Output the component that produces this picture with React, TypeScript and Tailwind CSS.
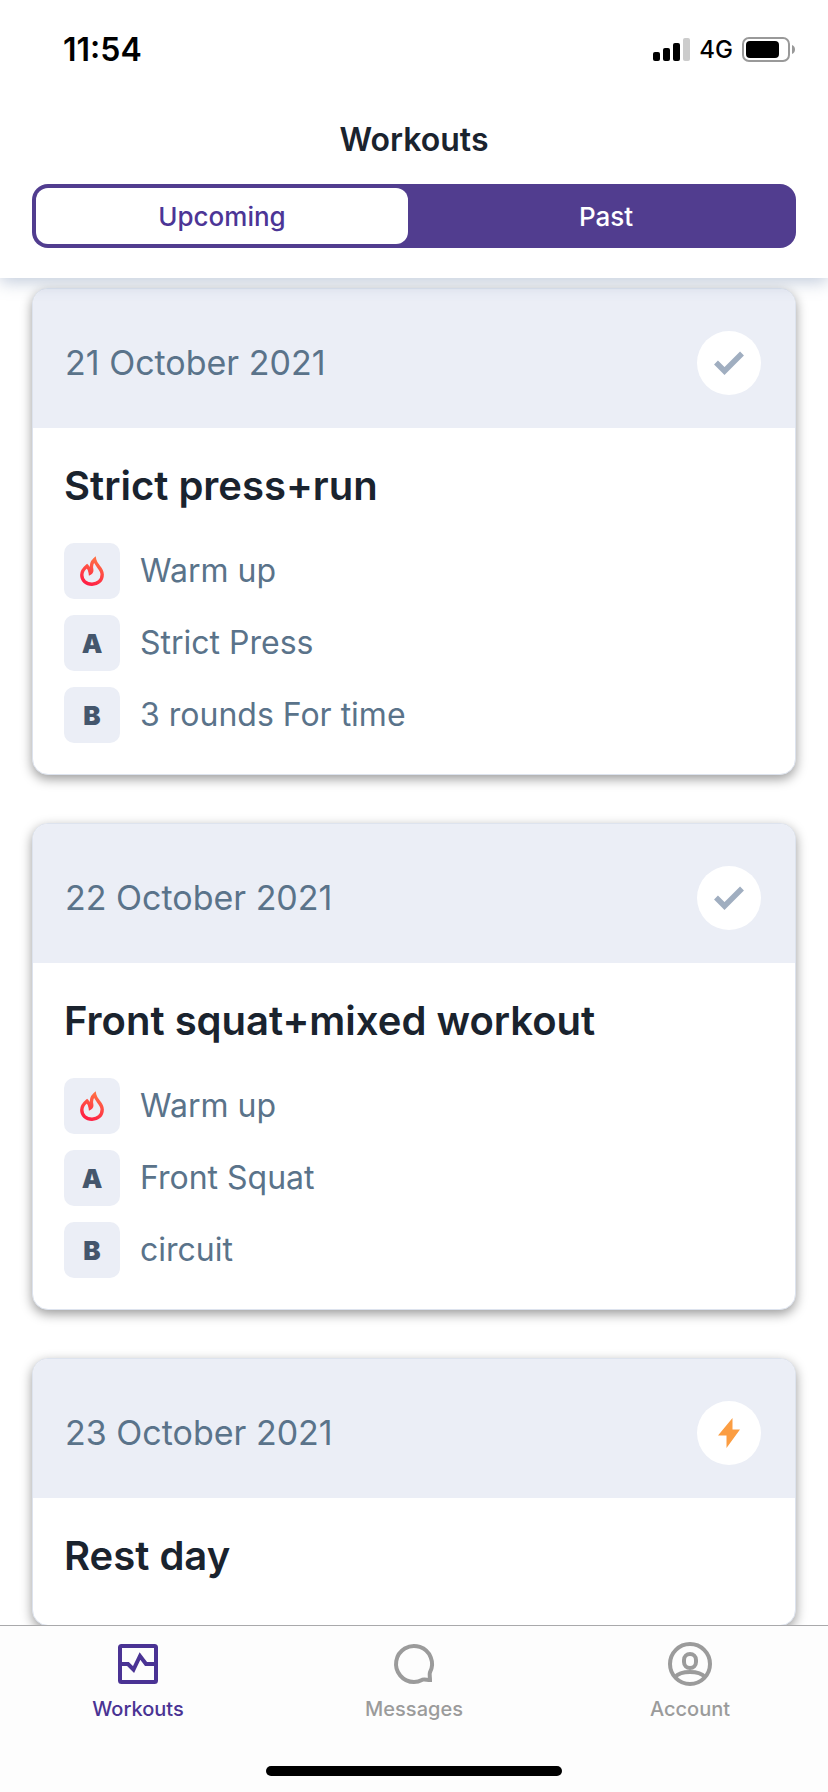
import { useState } from "react";

type Part = { badge: string; label: string };

type Workout = {
  date: string;
  title: string;
  rest?: boolean;
  parts: Part[];
};

const workouts: Workout[] = [
  {
    date: "21 October 2021",
    title: "Strict press+run",
    parts: [
      { badge: "warmup", label: "Warm up" },
      { badge: "A", label: "Strict Press" },
      { badge: "B", label: "3 rounds For time" },
    ],
  },
  {
    date: "22 October 2021",
    title: "Front squat+mixed workout",
    parts: [
      { badge: "warmup", label: "Warm up" },
      { badge: "A", label: "Front Squat" },
      { badge: "B", label: "circuit" },
    ],
  },
  {
    date: "23 October 2021",
    title: "Rest day",
    rest: true,
    parts: [],
  },
];

function SignalIcon() {
  return (
    <svg width="37" height="24" viewBox="0 0 37 24" aria-hidden="true">
      <rect x="0" y="14" width="7" height="9" rx="2" />
      <rect x="10" y="10" width="7" height="13" rx="2" />
      <rect x="20" y="5" width="7" height="18" rx="2" />
      <rect x="30" y="0" width="7" height="23" rx="2" fill="#cccccc" />
    </svg>
  );
}

function BatteryIcon() {
  return (
    <svg width="54" height="26" viewBox="0 0 54 26" aria-hidden="true">
      <rect x="1" y="1" width="46" height="23" rx="6" fill="none" stroke="#999999" strokeWidth="2" />
      <rect x="4" y="4" width="33" height="17" rx="4" />
      <path d="M50 8c2 .8 3 2.400 3 4.500s-1 3.700-3 4.500z" fill="#999999" />
    </svg>
  );
}

function FlameIcon() {
  return (
    <svg width="26" height="32" viewBox="0 0 26 32" fill="none" aria-hidden="true">
      <defs>
        <linearGradient id="flame" x1="20" y1="1" x2="6" y2="31" gradientUnits="userSpaceOnUse">
          <stop stopColor="#ff7a45" />
          <stop offset="1" stopColor="#ff1744" />
        </linearGradient>
      </defs>
      <path
        d="M15.600 4.500C12.300 7.500 12 11 12.700 14.500C13 16.500 12.500 17.300 11.300 18C11 15.500 10 13 8 11C5 13.500 2.800 16.500 2.800 20C2.800 25.500 7.200 29.200 13 29.200C18.800 29.200 23.200 25.500 23.200 19.500C23.200 13 16.800 11 15.600 4.500Z"
        stroke="url(#flame)"
        strokeWidth="3.400"
      />
    </svg>
  );
}

function CheckIcon() {
  return (
    <svg width="30" height="24" viewBox="0 0 30 24" fill="none" aria-hidden="true">
      <path d="M2 11.500 10.500 20 28 2.500" stroke="#a0aec0" strokeWidth="5.500" />
    </svg>
  );
}

function BoltIcon() {
  return (
    <svg width="22" height="30" viewBox="0 0 22 30" aria-hidden="true">
      <path d="M14.500 0v11.500H22L8.500 30V17.500H0z" fill="#fb9d42" />
    </svg>
  );
}

function WorkoutsIcon() {
  return (
    <svg width="48" height="48" viewBox="0 0 48 48" fill="none" stroke="currentColor" strokeWidth="4" aria-hidden="true">
      <rect x="6" y="6" width="36" height="36" rx="1.500" />
      <path d="M6 24h8l5.500 5.500L26 16l6 8h10" />
    </svg>
  );
}

function MessagesIcon() {
  return (
    <svg width="48" height="48" viewBox="0 0 48 48" fill="none" stroke="currentColor" strokeWidth="4" aria-hidden="true">
      <path d="M39.900 32.500A18 18 0 1 0 24 42c3.500 0 6-1 8.500-2.300 2-.7 4.500.3 7.500.3 0-3-.7-5.500-.1-7.500Z" />
    </svg>
  );
}

function AccountIcon() {
  return (
    <svg width="48" height="48" viewBox="0 0 48 48" fill="none" stroke="currentColor" strokeWidth="4" aria-hidden="true">
      <circle cx="24" cy="24" r="20" />
      <rect x="18" y="14" width="12" height="14" rx="6" />
      <path d="M9 37c3-3.500 8.500-5 15-5s12 1.500 15 5" />
    </svg>
  );
}

function StatusBar() {
  return (
    <div className="flex h-[100px] items-center justify-between pr-8 pl-[63px] text-black">
      <span className="text-[32px] leading-10 font-semibold">11:54</span>
      <div className="flex items-center gap-[9px]">
        <SignalIcon />
        <span className="text-2xl font-medium">4G</span>
        <BatteryIcon />
      </div>
    </div>
  );
}

function WorkoutCard({ workout }: { workout: Workout }) {
  return (
    <article className="overflow-hidden rounded-2xl border border-[#dde3ee] bg-white shadow-[0_4px_12px_rgba(0,0,0,0.4)]">
      <header className="flex items-center justify-between bg-[#ebeef6] pt-[42px] pr-[34px] pb-[33px] pl-8">
        <time className="text-[34px] leading-10 text-[#5a738a]">{workout.date}</time>
        <span className="flex size-16 items-center justify-center rounded-full bg-white">
          {workout.rest ? <BoltIcon /> : <CheckIcon />}
        </span>
      </header>
      <div className="px-[31px] pt-8 pb-[31px]">
        <h2 className="mb-3 text-[40px] leading-[52px] font-semibold text-[#1a232e]">
          {workout.title}
        </h2>
        {workout.parts.length > 0 && (
          <ul className="flex flex-col gap-4 pt-[19px]">
            {workout.parts.map((part) => (
              <li key={part.label} className="flex items-center gap-5">
                <span className="flex size-14 items-center justify-center rounded-[10px] bg-[#ebeef6] text-[26px] font-black text-[#44566c]">
                  {part.badge === "warmup" ? <FlameIcon /> : part.badge}
                </span>
                <span className="text-[32px] leading-10 text-[#5a738a]">{part.label}</span>
              </li>
            ))}
          </ul>
        )}
      </div>
    </article>
  );
}

const tabs = [
  { name: "Workouts", icon: WorkoutsIcon },
  { name: "Messages", icon: MessagesIcon },
  { name: "Account", icon: AccountIcon },
];

export default function App() {
  const [filter, setFilter] = useState("Upcoming");

  return (
    <div className="flex h-screen flex-col bg-white font-[Inter,sans-serif]">
      <header className="relative z-10 bg-white pb-[30px] shadow-[0_4px_16px_rgba(100,125,165,0.4)]">
        <StatusBar />
        <h1 className="pt-5 text-center text-[32px] leading-10 font-semibold text-[#1a232e]">
          Workouts
        </h1>
        <div className="mx-8 mt-6 flex gap-3 rounded-2xl bg-[#513d8f] p-1">
          {["Upcoming", "Past"].map((name) => (
            <button
              key={name}
              type="button"
              aria-pressed={filter === name}
              onClick={() => setFilter(name)}
              className={`h-14 flex-1 rounded-xl text-[26px] font-medium ${
                filter === name ? "bg-white text-[#4c3596]" : "text-white"
              }`}
            >
              {name}
            </button>
          ))}
        </div>
      </header>

      <main className="min-h-0 flex-1 overflow-y-auto px-8 pt-[10px] pb-8 [scrollbar-width:none]">
        <div className="flex flex-col gap-12">
          {workouts.map((workout) => (
            <WorkoutCard key={workout.date} workout={workout} />
          ))}
        </div>
      </main>

      <footer className="border-t border-[#a9a9ab] bg-[#fdfdfd] pt-[14px] pb-4">
        <nav className="grid grid-cols-3">
          {tabs.map(({ name, icon: Icon }) => (
            <a
              key={name}
              href={`#${name.toLowerCase()}`}
              className={`flex flex-col items-center gap-[7px] text-[20px] leading-7 font-medium ${
                name === "Workouts" ? "text-[#4a3394]" : "text-[#9b9b9b]"
              }`}
            >
              <Icon />
              {name}
            </a>
          ))}
        </nav>
        <div className="mx-auto mt-[43px] h-[10px] w-[296px] rounded-full bg-black" />
      </footer>
    </div>
  );
}
